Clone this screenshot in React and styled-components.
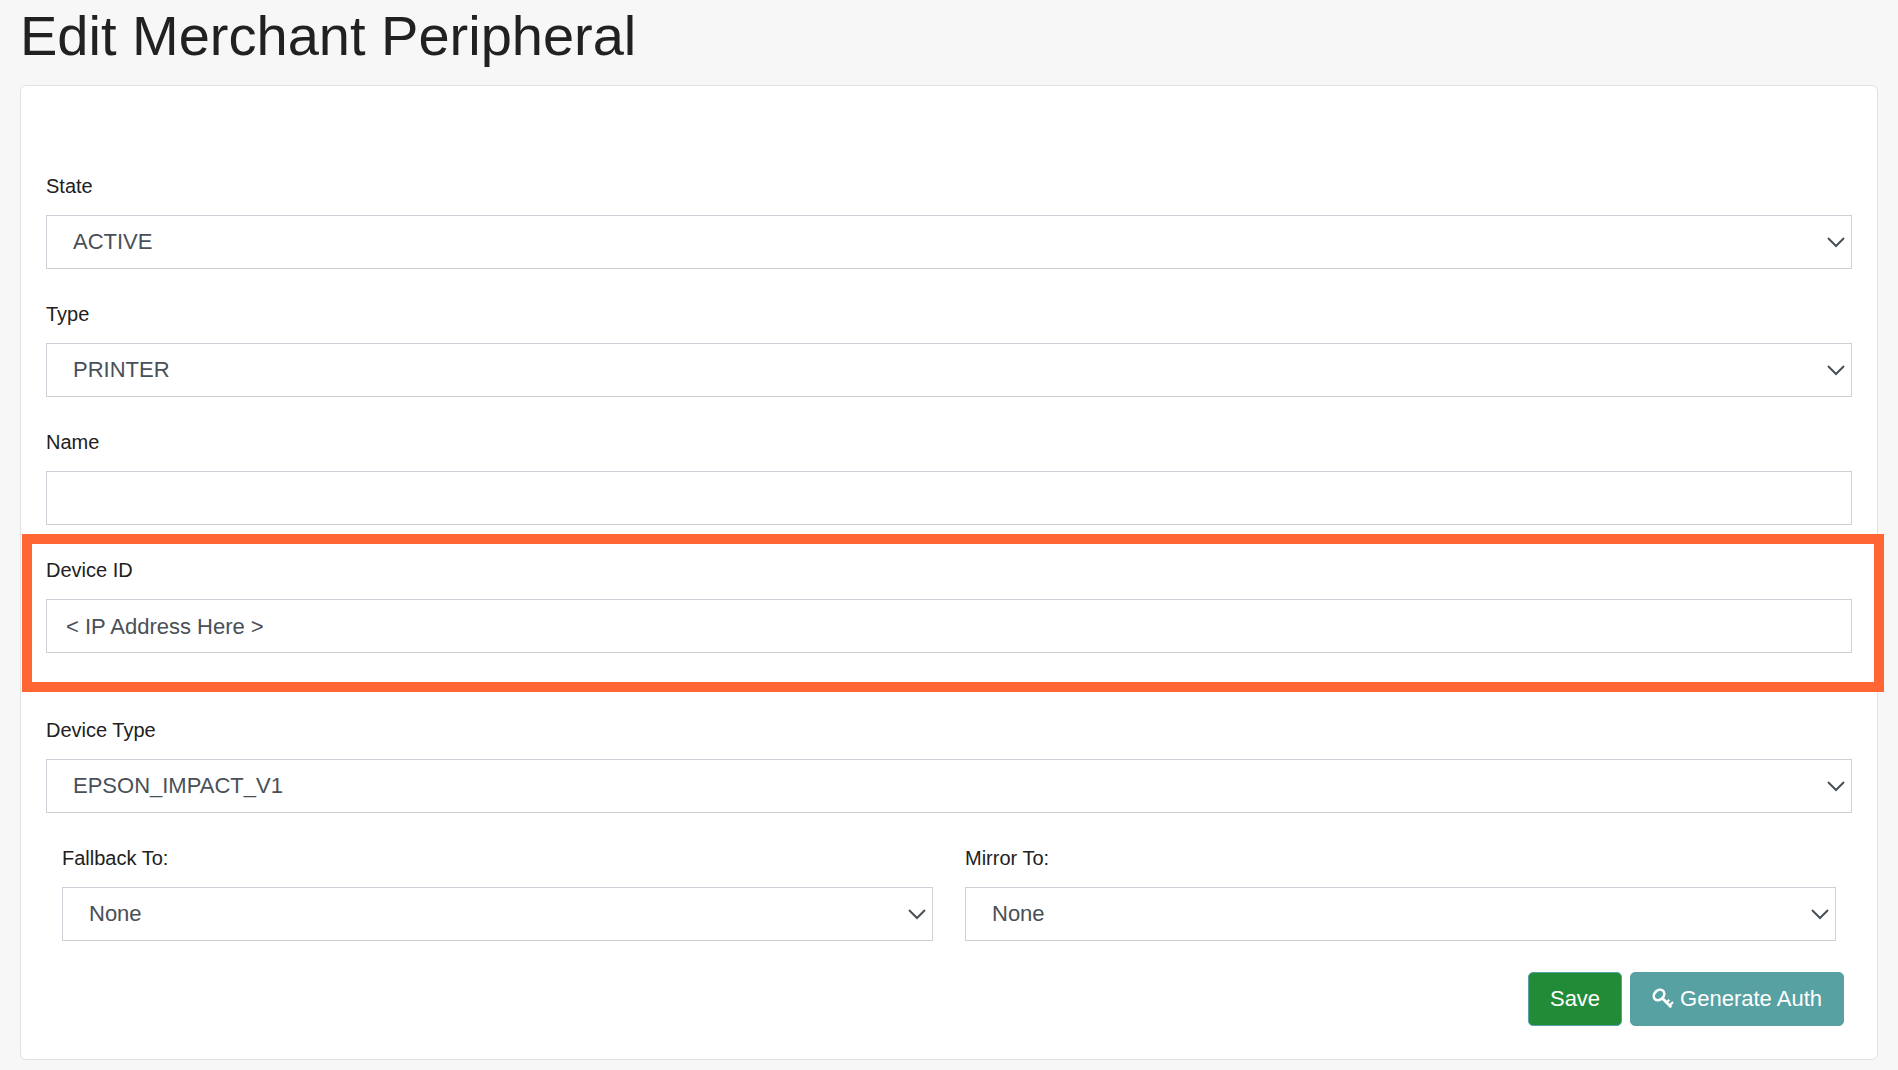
import React from "react";
import styled, { createGlobalStyle } from "styled-components";

const GlobalStyle = createGlobalStyle`
  *, *::before, *::after { box-sizing: border-box; }
  body {
    margin: 0;
    background: #f7f7f7;
    color: #212121;
    font-family: "Liberation Sans", Arial, Helvetica, sans-serif;
  }
`;

const Page = styled.main`
  padding: 2px 20px 10px;
`;

const Title = styled.h1`
  margin: 0 0 15px;
  font-size: 56px;
  font-weight: 400;
  line-height: 68px;
`;

const Card = styled.section`
  background: #fff;
  border: 1px solid #e2e2e2;
  border-radius: 6px;
  padding: 86px 25px 33px;
`;

const Form = styled.form`
  display: flex;
  flex-direction: column;
  gap: 31px;
`;

const Field = styled.div`
  position: relative;
  display: flex;
  flex-direction: column;
  gap: 15px;
  padding-bottom: ${(p) => (p.$highlighted ? "32px" : "0")};
`;

const Highlight = styled.div`
  position: absolute;
  inset: -22px -32px -7px -24px;
  border: 10px solid #ff6633;
  pointer-events: none;
`;

const Label = styled.label`
  font-size: 20px;
  line-height: 28px;
`;

const control = `
  width: 100%;
  height: 54px;
  margin: 0;
  border: 1px solid #ced0d8;
  border-radius: 0;
  background: #fff;
  color: #495057;
  font-family: inherit;
  font-size: 22px;
  line-height: 32px;
`;

const TextInput = styled.input`
  ${control}
  padding: 2px 19px 0;
`;

const SelectBox = styled.div`
  display: grid;
  align-items: center;
  > * { grid-area: 1 / 1; }
`;

const Select = styled.select`
  ${control}
  appearance: none;
  padding: 0 36px 0 26px;
`;

const Chevron = styled.svg`
  justify-self: end;
  margin-right: 6px;
  pointer-events: none;
`;

const Columns = styled.div`
  display: grid;
  grid-template-columns: 1fr 1fr;
  gap: 32px;
  padding: 0 16px;
`;

const Actions = styled.div`
  display: flex;
  justify-content: flex-end;
  gap: 8px;
  padding-right: 8px;
`;

const Button = styled.button`
  display: inline-flex;
  align-items: center;
  gap: 6px;
  height: 54px;
  padding: 0 21px;
  border: 1px solid #58a1a3;
  border-radius: 5px;
  background: ${(p) => (p.$primary ? "#228b37" : "#58a1a3")};
  color: #fff;
  font-family: inherit;
  font-size: 22px;
  line-height: 32px;
`;

function SelectField({ id, label, options }) {
  return (
    <Field>
      <Label htmlFor={id}>{label}</Label>
      <SelectBox>
        <Select id={id} name={id}>
          {options.map((o) => (
            <option key={o}>{o}</option>
          ))}
        </Select>
        <Chevron width="20" height="12" viewBox="0 0 20 12" fill="none" stroke="#495057" strokeWidth="2" aria-hidden="true">
          <path d="M2 2l8 8 8-8" />
        </Chevron>
      </SelectBox>
    </Field>
  );
}

function TextField({ id, label, value, highlighted }) {
  return (
    <Field $highlighted={highlighted}>
      <Label htmlFor={id}>{label}</Label>
      <TextInput id={id} name={id} type="text" defaultValue={value} />
      {highlighted && <Highlight />}
    </Field>
  );
}

function KeyIcon() {
  return (
    <svg width="22" height="22" viewBox="0 0 22 22" fill="none" stroke="#fff" aria-hidden="true">
      <ellipse cx="7" cy="7" rx="5.8" ry="4.6" transform="rotate(-45 7 7)" strokeWidth="2.6" />
      <path d="M10.3 10.3l9 9" strokeWidth="2.8" />
      <path d="M14.5 14.5l2.8-2.8M17.5 17.5l3.5-3.5" strokeWidth="2.2" />
    </svg>
  );
}

export default function App() {
  return (
    <>
      <GlobalStyle />
      <Page>
        <Title>Edit Merchant Peripheral</Title>
        <Card>
          <Form onSubmit={(e) => e.preventDefault()}>
            <SelectField id="state" label="State" options={["ACTIVE"]} />
            <SelectField id="type" label="Type" options={["PRINTER"]} />
            <TextField id="name" label="Name" value="" />
            <TextField id="device-id" label="Device ID" value="< IP Address Here >" highlighted />
            <SelectField id="device-type" label="Device Type" options={["EPSON_IMPACT_V1"]} />
            <Columns>
              <SelectField id="fallback" label="Fallback To:" options={["None"]} />
              <SelectField id="mirror" label="Mirror To:" options={["None"]} />
            </Columns>
            <Actions>
              <Button type="submit" $primary>Save</Button>
              <Button type="button">
                <KeyIcon />
                Generate Auth
              </Button>
            </Actions>
          </Form>
        </Card>
      </Page>
    </>
  );
}
